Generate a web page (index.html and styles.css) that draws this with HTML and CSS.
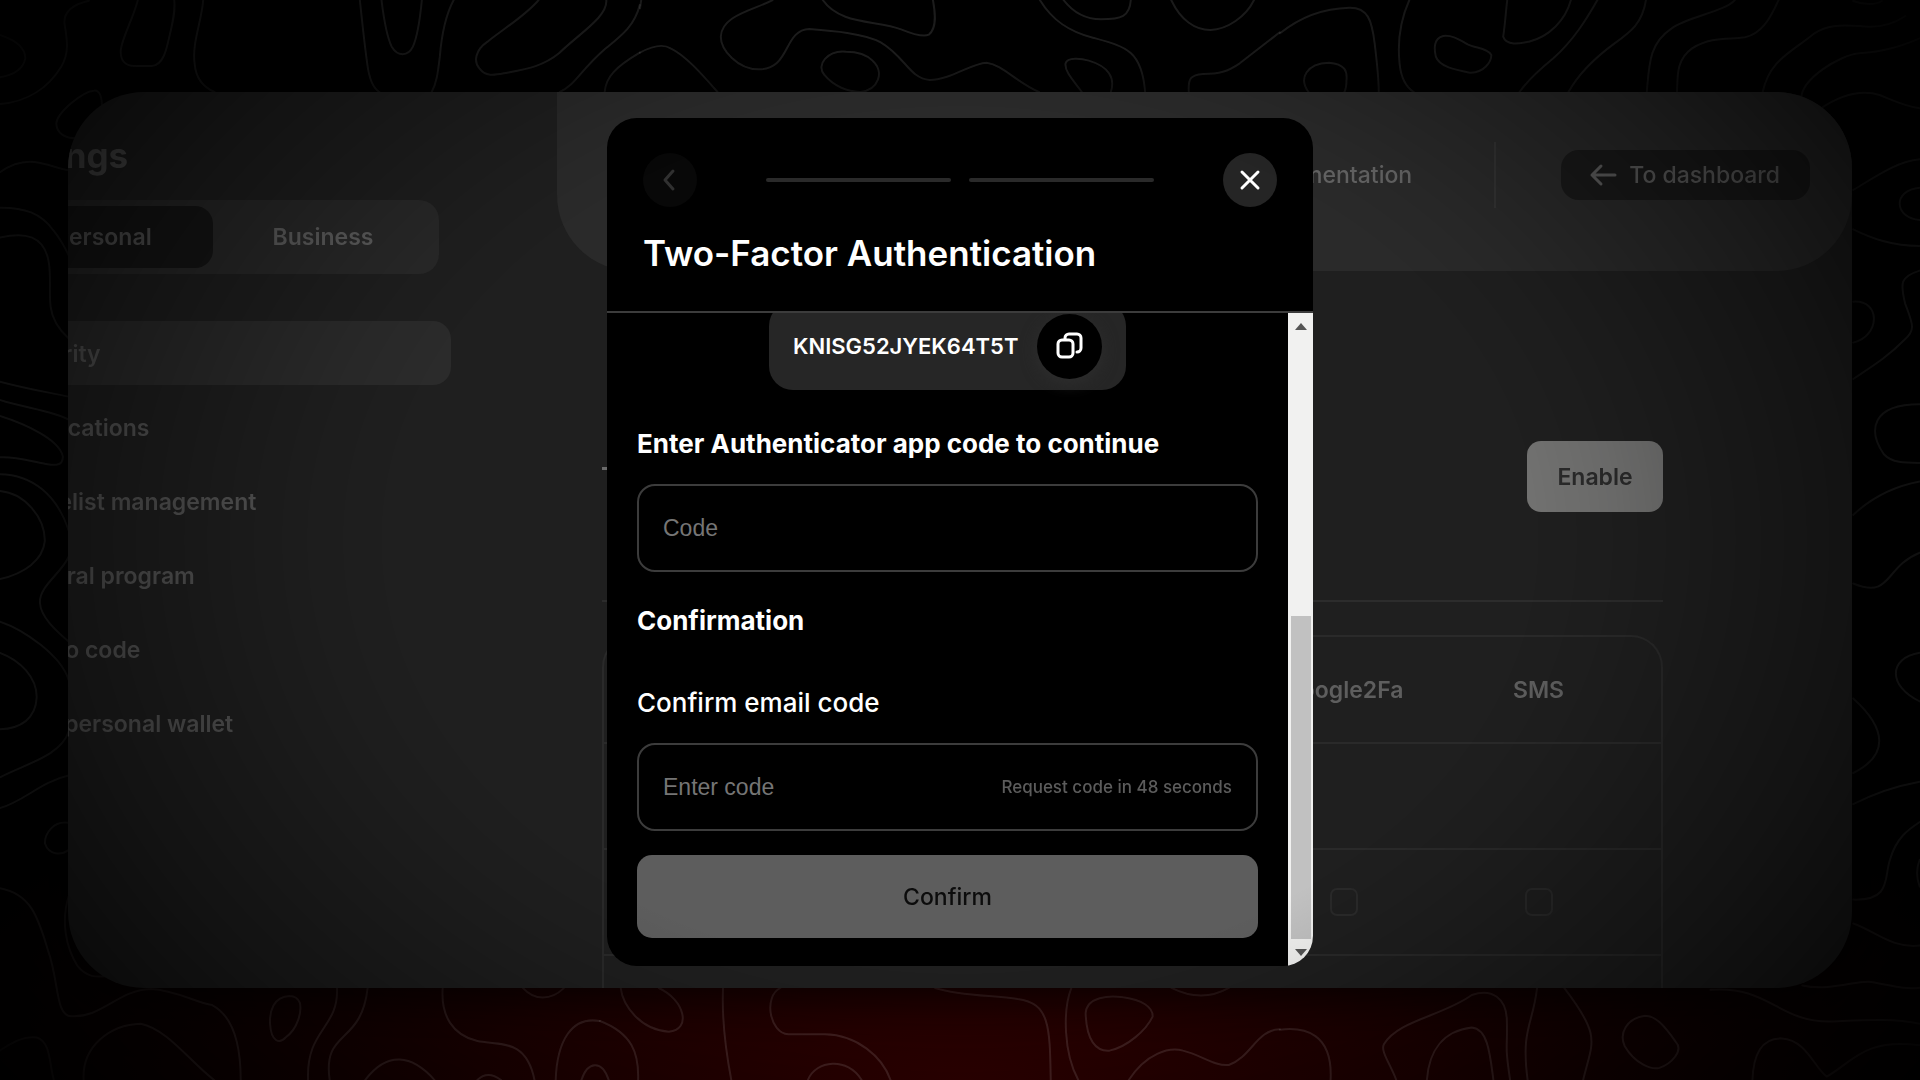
FILE: index.html
```html
<!DOCTYPE html>
<html lang="en">
<head>
<meta charset="utf-8">
<title>Two-Factor Authentication</title>
<meta name="viewport" content="width=device-width, initial-scale=1">
<link rel="stylesheet" href="styles.css">
</head>
<body>
<svg class="contours" viewBox="0 0 1920 1080" preserveAspectRatio="xMidYMid slice" aria-hidden="true">
  <g transform="scale(.408 .3333)">
    <path d="M0 105Q62 130 62 175Q55 220 0 232M218 2Q155 20 158 70C165 120 170 160 150 200C120 260 70 305 0 312M338 0C325 60 300 110 296 150C294 185 310 198 330 198L372 198C400 195 408 150 415 110C425 60 430 30 427 0M498 0C495 60 470 130 477 190C480 240 505 265 526 276M250 325C250 290 245 270 230 272C200 275 140 340 138 370C138 400 160 415 188 415"/>
    <path d="M0 517C30 490 60 483 85 486C120 492 140 505 168 511M0 623C60 622 100 640 130 690C150 720 160 745 168 765M0 713C60 695 110 705 120 790C125 830 120 880 124 920C128 960 150 995 168 1015M0 1145C60 1165 110 1175 168 1190"/>
    <path d="M882 0C888 70 893 130 900 190C905 240 915 265 930 276M935 0C940 50 948 110 960 140C975 170 1000 170 1012 140C1025 105 1030 50 1034 0M1112 0C1090 50 1082 110 1078 170C1073 220 1070 250 1058 276M1320 0C1290 45 1230 90 1195 125C1165 150 1160 185 1175 205C1190 230 1210 226 1235 220C1290 207 1330 200 1370 160C1420 100 1490 50 1486 0M1568 15C1555 80 1520 110 1480 150C1420 215 1410 255 1372 276M1568 158C1510 200 1485 230 1482 276"/>
  </g>
  <g transform="translate(640 0) scale(.408 .3333)">
    <path d="M3 0L0 25M0 158C30 138 55 130 75 145C110 165 150 220 190 276M325 0C280 30 200 45 198 110C198 150 240 208 290 208C370 210 350 90 415 87C470 92 550 100 590 127C650 170 660 235 710 240C760 240 810 190 850 188C890 195 920 245 978 276M448 0C490 75 580 60 640 88C670 103 695 112 708 104C728 85 724 40 718 0M505 155C460 150 430 195 452 225C475 260 510 275 540 276C585 270 600 215 570 182C555 163 530 155 505 155"/>
    <path d="M980 0C1010 60 1050 95 1110 113C1190 140 1230 150 1238 276M1038 0C1060 35 1090 58 1130 58C1180 58 1200 50 1203 0M1083 276C1065 245 1040 215 1043 190C1048 172 1080 175 1100 182C1150 200 1165 235 1154 276M1302 0C1325 60 1360 90 1398 90C1440 88 1485 50 1505 0M1345 276C1343 235 1350 225 1380 222C1420 222 1440 215 1470 190L1568 97"/>
  </g>
  <g transform="translate(1280 0) scale(.408 .3333)">
    <path d="M0 100C50 50 110 25 170 23C215 22 225 60 232 130C238 190 242 240 242 276M70 276C45 235 65 190 120 188C160 192 165 215 163 240C163 255 162 265 158 276M317 0C295 60 288 130 293 190C297 240 310 262 328 276M400 108C375 115 378 150 382 170C390 200 430 210 465 218C500 220 518 185 518 165C510 145 480 145 460 133C440 120 425 105 400 108M557 0C553 40 552 70 547 110C555 140 590 130 610 125C660 110 700 60 713 0M778 0C750 60 720 120 670 175C630 215 605 245 587 276M897 0C888 70 860 95 820 130C770 175 730 225 707 276"/>
    <path d="M1115 0C1090 35 1000 50 960 85C905 130 905 190 899 276M1222 0C1200 60 1180 100 1140 112C1100 120 1060 108 1010 145C970 180 975 230 973 276M1533 48C1500 75 1460 85 1420 78C1370 75 1340 75 1310 100C1250 160 1200 180 1183 276M1568 115C1520 140 1480 155 1420 160C1370 165 1275 240 1278 297M1323 327C1380 280 1430 270 1470 285C1510 305 1530 318 1568 325M1405 3C1430 15 1460 15 1475 3"/>
    <path d="M1405 570C1460 530 1510 485 1568 478M1568 563C1500 570 1505 655 1568 660M1405 688C1450 715 1500 738 1568 738M1568 812C1520 830 1520 850 1532 910C1550 970 1560 990 1530 1020C1490 1070 1450 1100 1405 1137M1405 905C1475 900 1470 1010 1405 1028"/>
  </g>
  <g transform="translate(0 400) scale(.408 .4337)">
    <path d="M0 0C60 18 130 25 168 45M0 37C60 55 145 90 154 130C155 155 130 150 110 147C70 140 40 130 0 132M0 171C80 172 140 220 168 300M0 210C60 215 110 270 110 325C105 370 60 400 0 413M168 362C150 400 95 430 98 468C100 500 135 530 168 557M0 511C60 530 150 590 168 645M0 583C50 600 90 640 90 685C88 735 50 758 0 759M168 765C150 820 60 840 0 870M168 866C100 880 60 925 0 941M168 975C130 970 110 1000 110 1022C120 1050 150 1050 168 1038"/>
    <path d="M0 1126C80 1140 95 1200 118 1270C145 1340 135 1420 175 1421C250 1425 290 1360 370 1358C430 1360 480 1390 520 1395C570 1420 590 1480 590 1568M168 1145C150 1200 160 1260 190 1305C215 1335 240 1330 270 1328M205 1568C200 1490 270 1440 345 1438C410 1450 470 1530 525 1568M0 1500C30 1480 60 1465 90 1470C125 1480 120 1530 132 1568"/>
    <path d="M710 1374C670 1375 660 1410 662 1440C665 1480 685 1485 700 1470C730 1450 740 1410 735 1390C730 1378 720 1374 710 1374M826 1356C830 1450 750 1450 755 1568M901 1356C885 1490 790 1450 808 1568M1085 1356C1080 1420 1110 1465 1170 1478C1220 1488 1290 1470 1310 1568M895 1568C950 1500 1010 1510 1065 1568M1170 1568Q1195 1545 1228 1568M1282 1356C1310 1385 1350 1385 1382 1356M1362 1568C1365 1480 1400 1420 1470 1432M1425 1568C1440 1525 1475 1520 1492 1568"/>
  </g>
  <g transform="translate(600 700) scale(.459 .3333)">
    <path d="M45 864C50 920 90 990 150 995C200 990 185 900 128 864M0 963C70 1000 85 1060 83 1140M268 864C265 960 275 1060 286 1140M393 864C355 890 370 1000 410 1003L490 1003C560 1005 615 1070 633 1140M453 1140C470 1080 540 1070 570 1140M730 864C790 890 860 885 910 897C980 910 980 980 982 1140M1027 864C1008 930 1010 1060 1042 1140"/>
    <path d="M1058 940C1060 890 1110 885 1140 892C1180 900 1205 920 1204 950C1190 990 1150 1040 1110 1052C1080 1055 1060 1020 1058 940M1245 864C1290 895 1330 895 1370 864M1152 1140C1190 1060 1240 1040 1270 1052C1310 1065 1340 1100 1370 1095C1420 1070 1430 990 1481 988"/>
  </g>
  <g transform="translate(1280 400) scale(.408 .4337)">
    <path d="M0 1452C60 1445 130 1460 124 1568M285 1568C270 1530 245 1500 255 1485C290 1430 400 1420 470 1372C520 1355 555 1380 556 1430C558 1500 550 1480 564 1568M360 1568C365 1500 400 1455 470 1447C510 1450 515 1510 523 1568M630 1356C620 1440 590 1450 607 1568M697 1356C790 1470 765 1480 743 1568M895 1420C850 1425 830 1460 845 1490C870 1530 910 1545 930 1540C960 1530 990 1500 970 1480C940 1440 920 1420 895 1420"/>
    <path d="M1055 1360C1200 1350 1220 1435 1350 1433C1430 1430 1500 1425 1568 1438M1280 1350C1350 1365 1420 1335 1450 1342C1500 1350 1530 1360 1568 1355M1158 1568C1160 1510 1180 1470 1230 1472C1290 1475 1310 1540 1340 1560C1400 1530 1430 1470 1568 1488M1405 1207C1460 1225 1500 1265 1568 1258M1405 1152C1500 1155 1480 1100 1495 1060C1510 1010 1540 990 1568 973M1568 1060Q1555 1090 1568 1122"/>
    <path d="M1405 932C1460 905 1510 890 1568 880M1405 688C1490 760 1490 820 1405 860M1568 583C1490 595 1490 660 1568 695M1405 423C1500 460 1480 385 1568 352M1405 265C1450 225 1500 200 1568 188M1568 10C1450 10 1440 70 1480 125C1500 145 1530 145 1568 145"/>
  </g>
</svg>

<div class="stage">
  <div class="panel">
    <aside class="sidebar">
      <h1 class="page-title">Settings</h1>
      <div class="tabs">
        <button class="tab tab-active" type="button">Personal</button>
        <button class="tab" type="button">Business</button>
      </div>
      <nav class="menu">
        <a class="menu-link menu-link-active" href="#">Security</a>
        <a class="menu-link" href="#">Notifications</a>
        <a class="menu-link" href="#">Whitelist management</a>
        <a class="menu-link" href="#">Referral program</a>
        <a class="menu-link" href="#">Promo code</a>
        <a class="menu-link" href="#">Your personal wallet</a>
      </nav>
    </aside>
    <main class="main">
      <header class="topbar">
        <a class="docs-link" href="#">Documentation</a>
        <span class="divider"></span>
        <a class="dashboard-link" href="#">
          <svg width="28" height="24" viewBox="0 0 28 24" aria-hidden="true"><path d="M26 12H3M12 3L3 12L12 21"/></svg>
          To dashboard
        </a>
      </header>
      <section class="content">
        <div class="method">
          <span class="dash"></span>
          <button class="enable" type="button">Enable</button>
        </div>
        <div class="table-frame">
          <table class="channels">
            <thead>
              <tr><th></th><th class="col">Google2Fa</th><th class="col">SMS</th><th class="edge"></th></tr>
            </thead>
            <tbody>
              <tr><td></td><td></td><td></td><td></td></tr>
              <tr><td></td><td><input type="checkbox" aria-label="Google2Fa"></td><td><input type="checkbox" aria-label="SMS"></td><td></td></tr>
              <tr><td></td><td></td><td></td><td></td></tr>
            </tbody>
          </table>
        </div>
      </section>
    </main>
  </div>
</div>

<div class="overlay">
  <section class="modal" role="dialog" aria-labelledby="modal-title">
    <header class="modal-head">
      <div class="steps">
        <button class="round back" type="button" aria-label="Back">
          <svg width="24" height="24" viewBox="0 0 24 24" aria-hidden="true"><path d="M15 3L7 12L15 21"/></svg>
        </button>
        <div class="progress"><span></span><span></span></div>
        <button class="round close" type="button" aria-label="Close">
          <svg width="24" height="24" viewBox="0 0 24 24" aria-hidden="true"><path d="M4 4L20 20M20 4L4 20"/></svg>
        </button>
      </div>
      <h2 class="modal-title" id="modal-title">Two-Factor Authentication</h2>
    </header>
    <div class="modal-body">
      <form class="form">
        <div class="secret">
          <span>KNISG52JYEK64T5T</span>
          <button class="copy" type="button" aria-label="Copy">
            <svg width="28" height="28" viewBox="0 0 28 28" aria-hidden="true"><rect x="2" y="8" width="15" height="17" rx="4"/><path d="M9 7V6a4 4 0 0 1 4-4h8a4 4 0 0 1 4 4v10a4 4 0 0 1-4 4"/></svg>
          </button>
        </div>
        <label class="heading" for="app-code">Enter Authenticator app code to continue</label>
        <div class="field"><input id="app-code" type="text" placeholder="Code"></div>
        <h3 class="heading second">Confirmation</h3>
        <label class="label" for="email-code">Confirm email code</label>
        <div class="field"><input id="email-code" type="text" placeholder="Enter code"><span class="timer">Request code in 48 seconds</span></div>
        <button class="confirm" type="submit">Confirm</button>
      </form>
      <div class="scrollbar" aria-hidden="true">
        <svg width="12" height="7" viewBox="0 0 12 7"><path d="M0 7L6 0L12 7Z"/></svg>
        <div class="track"><div class="thumb"></div></div>
        <svg width="12" height="7" viewBox="0 0 12 7"><path d="M0 0L6 7L12 0Z"/></svg>
      </div>
    </div>
  </section>
</div>
<div class="vignette"></div>
</body>
</html>
```
FILE: styles.css
```css
* { box-sizing: border-box; }

body {
  margin: 0;
  min-height: 100vh;
  overflow: hidden;
  background: #000 radial-gradient(ellipse 60% 38% at 50% 100%, #2e0000, #1f0000 40%, #0d0000 75%, #000);
  color: #5e5e5e;
  font: 500 23px/32px Inter, "Liberation Sans", sans-serif;
}

h1, h2, h3 { margin: 0; }
a { color: inherit; text-decoration: none; }
button { border: 0; padding: 0; font: inherit; color: inherit; }
svg { display: block; fill: none; stroke: currentColor; stroke-width: 3; stroke-linecap: round; stroke-linejoin: round; }

.contours {
  position: fixed;
  inset: 0;
  width: 100%;
  height: 100%;
  stroke: rgba(255, 255, 255, .13);
  stroke-width: 2;
}
.contours path { vector-effect: non-scaling-stroke; }

.stage { position: relative; height: 100vh; padding: 92px 68px; }

.panel {
  display: flex;
  height: 100%;
  overflow: hidden;
  border-radius: 76px;
  background: #1f1f1f;
  box-shadow: 0 0 60px #000;
}

/* The sidebar starts to the left of the panel and is cropped by it */
.sidebar { flex: none; width: 570px; margin-left: -81px; padding-top: 43px; font-weight: 600; }
.page-title { font-size: 35px; line-height: 40px; color: #505050; }

.tabs {
  display: flex;
  width: 452px;
  margin-top: 25px;
  padding: 6px;
  border-radius: 20px;
  background: #292929;
}
.tab { flex: 1; height: 62px; border-radius: 18px; background: none; }
.tab-active { background: #161616; color: #555; }

.menu { display: flex; flex-direction: column; gap: 10px; width: 464px; margin-top: 47px; }
.menu-link { height: 64px; padding: 17px 20px 15px; border-radius: 18px; color: #545454; }
.menu-link-active { background: #2b2b2b; }

.main { flex: 1; min-width: 0; }
.topbar {
  display: flex;
  align-items: center;
  justify-content: flex-end;
  height: 179px;
  padding: 0 42px 14px 0;
  border-radius: 0 0 76px 76px;
  background: #2a2a2a;
}
.docs-link { color: #646464; }
.divider { width: 2px; height: 66px; margin: 0 65px 0 82px; background: #333; }
.dashboard-link {
  display: flex;
  align-items: center;
  gap: 12px;
  height: 50px;
  padding: 0 30px 0 28px;
  border-radius: 18px;
  background: #1a1a1a;
}

.content { padding: 170px 189px 0 45px; }
.method { display: flex; align-items: center; justify-content: space-between; height: 161px; padding-bottom: 88px; border-bottom: 2px solid #2c2c2c; }
.dash { width: 24px; height: 3px; margin-bottom: 16px; background: #6a6a6a; }
.enable { width: 136px; height: 71px; border-radius: 14px; background: #717170; color: #2a2a2a; font-weight: 600; }

.table-frame { margin-top: 33px; border: 2px solid #2a2a2a; border-bottom: 0; border-radius: 32px 32px 0 0; }
.channels { width: 100%; border-collapse: collapse; table-layout: fixed; }
.channels tr { height: 106px; }
.channels th, .channels td { padding: 0; font-weight: 600; text-align: center; }
.channels tr { border-bottom: 2px solid #2a2a2a; }
.col { width: 195px; }
.edge { width: 25px; }
.channels input {
  appearance: none;
  display: block;
  width: 28px;
  height: 28px;
  margin: 0 auto;
  border: 2px solid #2a2a2a;
  border-radius: 7px;
}

.overlay {
  position: fixed;
  inset: 0;
  display: grid;
  place-items: center;
  padding-top: 4px;
}
.modal { width: 706px; overflow: hidden; border-radius: 30px; background: #000; color: #fff; }
.modal-head { padding: 35px 36px 38px; border-bottom: 2px solid #3c3c3c; }
.steps { display: flex; align-items: center; justify-content: space-between; }
.round { display: grid; place-items: center; width: 54px; height: 54px; border-radius: 50%; }
.back { background: #080808; color: #303030; }
.close { background: #252525; }
.progress { display: flex; gap: 18px; width: 388px; }
.progress span { flex: 1; height: 4px; border-radius: 2px; background: #2a2a2a; }
.modal-title { margin-top: 26px; font-size: 35px; line-height: 40px; font-weight: 600; }

.modal-body { display: flex; overflow: hidden; }
.form { display: flex; flex: 1; flex-direction: column; padding: 0 30px 28px; }

.secret {
  display: flex;
  align-items: center;
  align-self: center;
  justify-content: space-between;
  width: 357px;
  height: 88px;
  margin-top: -11px;
  padding: 0 24px;
  border-radius: 24px;
  background: #262626;
  font-size: 22px;
  font-weight: 600;
}
.copy { display: grid; place-items: center; width: 65px; height: 65px; border-radius: 50%; background: #000; box-shadow: 0 4px 16px #2e2e2e; }
.heading { margin: 38px 0 24px; font-size: 26px; line-height: 32px; font-weight: 700; }
.second { margin: 33px 0 50px; }
.label { margin-bottom: 24px; font-size: 26px; }
.field {
  display: flex;
  align-items: center;
  height: 88px;
  padding: 0 24px;
  border: 2px solid #3c3c3c;
  border-radius: 18px;
}
.field input {
  flex: 1;
  min-width: 0;
  padding: 0;
  border: 0;
  outline: 0;
  background: none;
  color: #fff;
  font: 400 23px/32px "Liberation Sans", sans-serif;
}
.field input::placeholder { color: #757575; }
.timer { font-size: 17px; color: #5c5c5c; }
.confirm { height: 83px; margin-top: 24px; border-radius: 15px; background: #5d5d5d; color: #0c0c0c; }

.scrollbar { display: flex; flex-direction: column; align-items: center; width: 25px; padding: 10px 0; background: #f1f1f0; }
.scrollbar svg { fill: #555; stroke: none; }
.track { display: flex; flex: 1; flex-direction: column; justify-content: flex-end; width: 20px; padding: 10px 0; }
.thumb { height: 54%; background: #c1c1c1; }

.vignette {
  position: fixed;
  inset: 0;
  pointer-events: none;
  background: radial-gradient(ellipse 1200px 900px at center, transparent 48%, rgba(0, 0, 0, .06) 54%, rgba(0, 0, 0, .15) 60%, rgba(0, 0, 0, .38) 74%, rgba(0, 0, 0, .58) 84%, rgba(0, 0, 0, .92));
}
```
